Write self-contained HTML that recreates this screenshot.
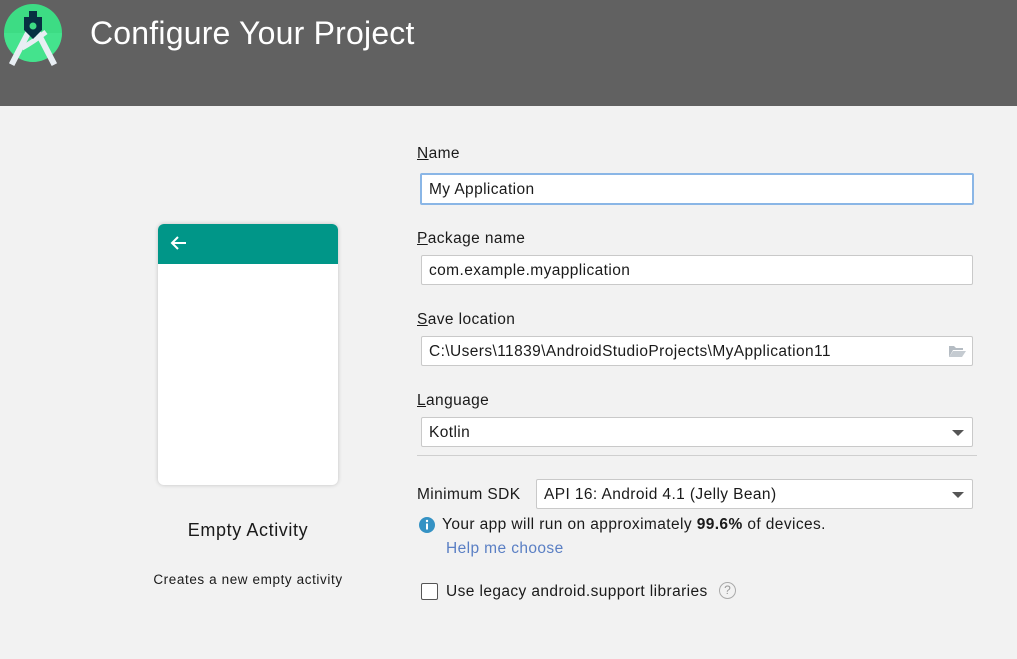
<!DOCTYPE html>
<html><head><meta charset="utf-8"><style>
*{margin:0;padding:0;box-sizing:border-box}
body{width:1017px;height:659px;background:#f2f2f2;font-family:"Liberation Sans","Noto Sans CJK SC",sans-serif;color:#1a1a1a;position:relative;overflow:hidden;font-size:15.5px;letter-spacing:0.4px}
.hdr{position:absolute;left:0;top:0;width:1017px;height:106px;background:#616161}
.title{position:absolute;left:90px;top:15px;font-size:32px;color:#fff;letter-spacing:0.2px}
.a{position:absolute}
.lbl{position:absolute;left:417px;top:0}
.lbl u{text-decoration:underline}
.in{position:absolute;left:421px;width:552px;height:30px;background:#fff;border:1px solid #c9c9c9;border-radius:2px;padding-left:7px;line-height:29px}
.arr{position:absolute;right:8px;top:12px;width:0;height:0;border-left:6px solid transparent;border-right:6px solid transparent;border-top:6px solid #555}
.card{position:absolute;left:158px;top:224px;width:180px;height:261px;background:#fff;border-radius:6px;box-shadow:0 0 4px rgba(0,0,0,.2);overflow:hidden}
.card .bar{height:40px;background:#009688}
</style></head><body>
<div class="hdr">
<svg class="a" style="left:0;top:0" width="70" height="70" viewBox="0 0 70 70">
<circle cx="33" cy="33" r="29" fill="#3ddc84"/>
<path d="M4 33a29 29 0 0 0 58 0z" fill="#4bea95" opacity=".5"/>
<path d="M13 62 L28 33 M53 62 L38 33" stroke="#e8eef3" stroke-width="6" stroke-linecap="square"/>
<path d="M22 48 Q33 42 46 32" stroke="#e8eef3" stroke-width="5" fill="none"/>
<rect x="29" y="11" width="8" height="6" fill="#073042"/>
<path d="M24 17h18v13l-9 9l-9-9z" fill="#073042"/>
<circle cx="33" cy="26" r="3.5" fill="#3ddc84"/>
</svg>
<div class="title">Configure Your Project</div>
</div>
<div class="card"><div class="bar"><svg width="40" height="40" viewBox="0 0 40 40"><path d="M28 19H14M20 13l-6 6 6 6" stroke="#fff" stroke-width="2" fill="none"/></svg></div></div>
<div class="a" style="left:140px;top:520px;width:216px;text-align:center;font-size:18px;letter-spacing:0.6px">Empty Activity</div>
<div class="a" style="left:120px;top:572px;width:256px;text-align:center;font-size:13.5px;letter-spacing:0.6px">Creates a new empty activity</div>

<div class="lbl" style="top:145px"><u>N</u>ame</div>
<div class="in" style="left:420px;top:173px;width:554px;height:32px;border:2px solid #8ab6e6;line-height:29px">My Application</div>
<div class="lbl" style="top:230px"><u>P</u>ackage name</div>
<div class="in" style="top:255px">com.example.myapplication</div>
<div class="lbl" style="top:311px"><u>S</u>ave location</div>
<div class="in" style="top:336px">C:\Users\11839\AndroidStudioProjects\MyApplication11
<svg class="a" style="right:6px;top:7px" width="18" height="14" viewBox="0 0 18 14"><path d="M1 2h5l2 2h7v2H5L1 13z" fill="#b5bcc3"/><path d="M5 7h13l-4 6H1z" fill="#c5cbd1"/></svg></div>
<div class="lbl" style="top:392px"><u>L</u>anguage</div>
<div class="in" style="top:417px">Kotlin<div class="arr"></div></div>
<div class="a" style="left:417px;top:455px;width:560px;height:1px;background:#cfcfcf"></div>
<div class="lbl" style="top:486px">Minimum SDK</div>
<div class="in" style="left:536px;width:437px;top:479px">API 16: Android 4.1 (Jelly Bean)<div class="arr"></div></div>
<svg class="a" style="left:418px;top:516px" width="18" height="18" viewBox="0 0 18 18"><circle cx="9" cy="9" r="8" fill="#3592c4"/><rect x="8" y="7.5" width="2" height="6" fill="#fff"/><circle cx="9" cy="5" r="1.2" fill="#fff"/></svg>
<div class="a" style="left:442px;top:516px">Your app will run on approximately <b>99.6%</b> of devices.</div>
<div class="a" style="left:446px;top:540px;color:#5a7fc4">Help me choose</div>
<div class="a" style="left:421px;top:583px;width:17px;height:17px;border:1px solid #555;border-radius:2px;background:#fff"></div>
<div class="a" style="left:446px;top:583px">Use legacy android.support libraries</div>
<div class="a" style="left:719px;top:582px;width:17px;height:17px;border:1px solid #aaa;border-radius:50%;color:#999;font-size:12px;letter-spacing:0;text-align:center;line-height:15px">?</div>
</body></html>
